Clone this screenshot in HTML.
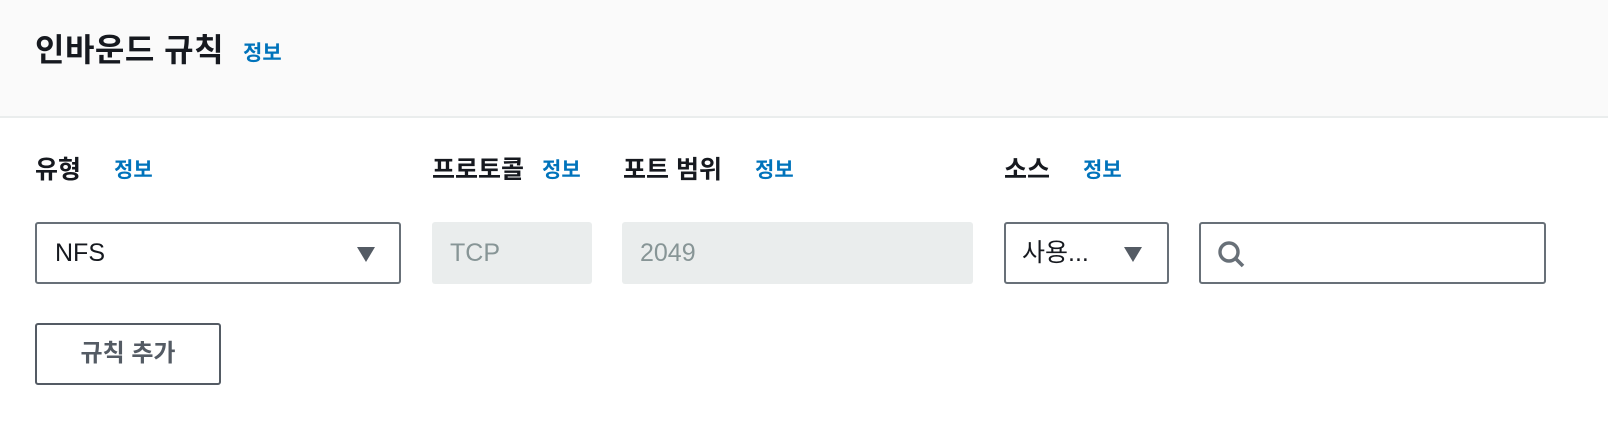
<!DOCTYPE html>
<html><head><meta charset="utf-8"><style>
body{margin:0;width:1608px;height:428px;background:#fff;position:relative;overflow:hidden;font-family:"Liberation Sans","Noto Sans CJK KR",sans-serif;}
.a{position:absolute;white-space:nowrap;}
.hdr{position:absolute;left:0;top:0;width:1608px;height:116px;background:#fafafa;border-bottom:2px solid #eaeded;}
.t{font-size:32px;font-weight:bold;color:#16191f;line-height:1;letter-spacing:0.5px}
.i{font-size:21px;font-weight:bold;color:#0073bb;line-height:1;}
.l{font-size:25px;font-weight:bold;color:#16191f;line-height:1;}
.box{position:absolute;box-sizing:border-box;border:2px solid #687078;border-radius:3px;height:62px;top:222px;background:#fff;font-size:25px;color:#16191f;line-height:58px;padding-left:18px;}
.dis{position:absolute;box-sizing:border-box;border-radius:3px;height:62px;top:222px;background:#eaeded;font-size:25px;color:#879596;line-height:62px;padding-left:18px;}
.tri{position:absolute;top:23px;width:0;height:0;border-left:9px solid transparent;border-right:9px solid transparent;border-top:15px solid #545b64;}
</style></head><body>
<div class="hdr"></div>
<div class="a t" style="left:35px;top:34px">인바운드 규칙</div>
<div class="a i" style="left:243px;top:43px">정보</div>

<div class="a l" style="left:35px;top:158px">유형</div>
<div class="a i" style="left:114px;top:160px">정보</div>
<div class="a l" style="left:432px;top:158px">프로토콜</div>
<div class="a i" style="left:542px;top:160px">정보</div>
<div class="a l" style="left:623px;top:158px">포트 범위</div>
<div class="a i" style="left:755px;top:160px">정보</div>
<div class="a l" style="left:1004px;top:158px">소스</div>
<div class="a i" style="left:1083px;top:160px">정보</div>

<div class="box" style="left:35px;width:366px">NFS<div class="tri" style="left:320px"></div></div>
<div class="dis" style="left:432px;width:160px">TCP</div>
<div class="dis" style="left:622px;width:351px">2049</div>
<div class="box" style="left:1004px;width:165px;padding-left:16px">사용...<div class="tri" style="left:118px"></div></div>
<div class="box" style="left:1199px;width:347px">
<svg style="position:absolute;left:15px;top:15px" width="32" height="32" viewBox="0 0 32 32"><circle cx="13" cy="13" r="9" fill="none" stroke="#687078" stroke-width="3.4"/><line x1="19.5" y1="19.5" x2="27" y2="27" stroke="#687078" stroke-width="3.6"/></svg>
</div>
<div class="a" style="left:35px;top:323px;width:186px;height:62px;box-sizing:border-box;border:2px solid #545b64;border-radius:3px;text-align:center;line-height:58px;font-size:24px;font-weight:bold;color:#545b64">규칙 추가</div>
</body></html>
